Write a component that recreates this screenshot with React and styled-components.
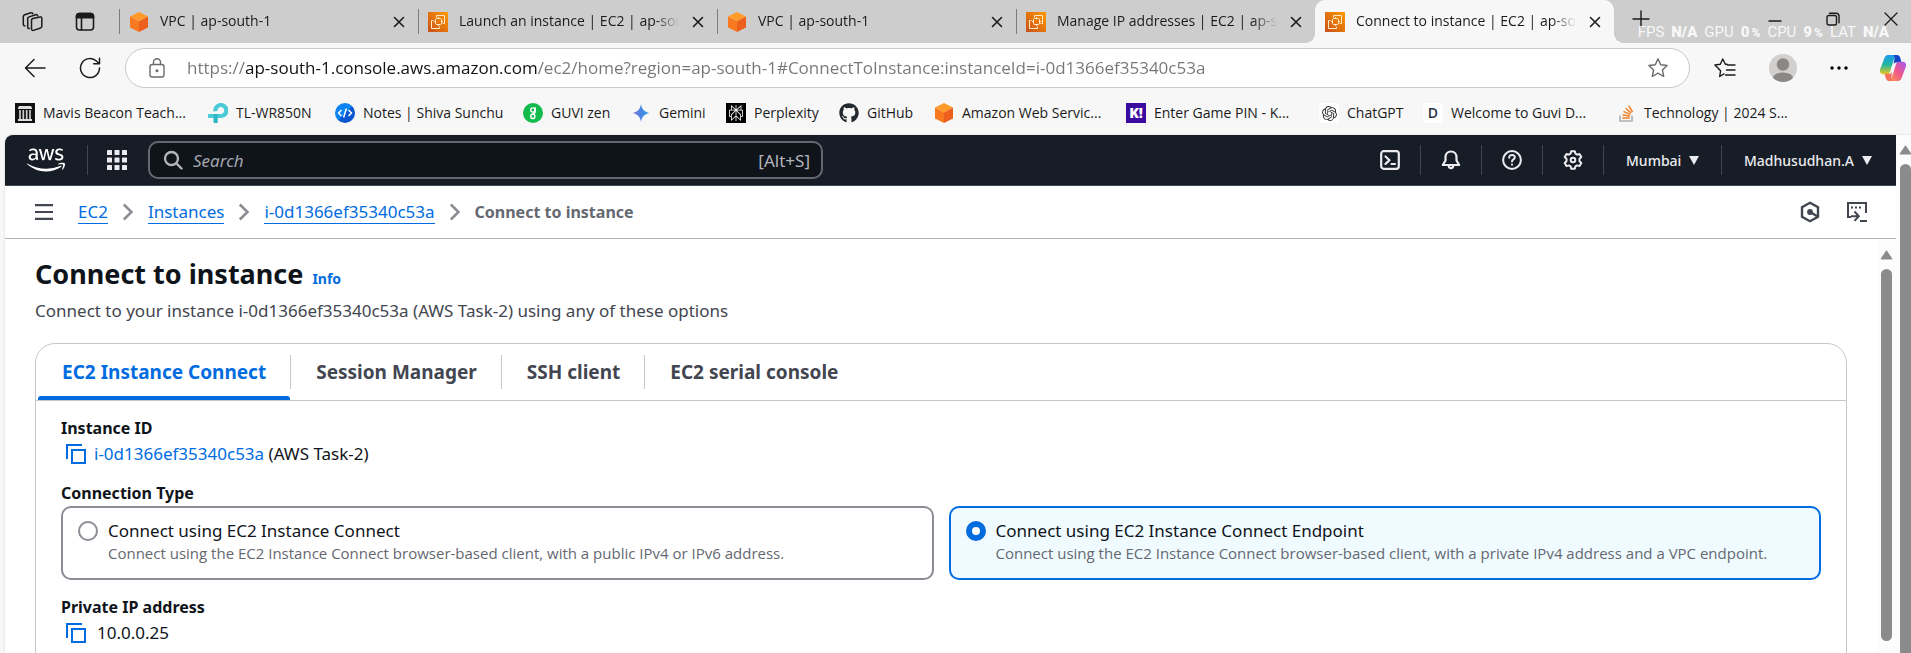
import React, { useState } from 'react';
import styled, { createGlobalStyle, css } from 'styled-components';
import { FaAws, FaGithub } from 'react-icons/fa';
import { SiOpenai, SiPerplexity } from 'react-icons/si';

const GlobalStyle = createGlobalStyle`
  *, *::before, *::after { box-sizing: border-box; }
  body { margin: 0; }
  button { font: inherit; color: inherit; background: none; border: 0; padding: 0; cursor: pointer; }
  a { text-decoration: none; }
  svg { display: block; flex: none; }
`;

const uiFont = `'Open Sans', 'Noto Sans', sans-serif`;
const pageFont = `'Noto Sans', 'Open Sans', sans-serif`;

/* ---------- browser frame ---------- */

const Browser = styled.div`
  height: 100vh;
  display: flex;
  flex-direction: column;
  overflow: hidden;
  background: #f7f7f7;
  color: #1b1b1b;
  font-family: ${uiFont};
  font-size: 14px;
`;

const TabStrip = styled.header`
  position: relative;
  display: flex;
  flex: none;
  height: 43px;
  background: #cdcdcd;
`;

const StripTools = styled.div`
  display: flex;
  align-items: center;
  flex: none;
  gap: 32px;
  width: 119px;
  padding-left: 21px;
`;

const IconButton = styled.button`
  display: flex;
  align-items: center;
  justify-content: center;
  flex: none;
  width: ${(p) => p.$w || 22}px;
  height: ${(p) => p.$h || 22}px;
  color: ${(p) => p.$color || 'inherit'};
`;

const Tabs = styled.div`
  display: flex;
  flex: 0 1 1495px;
  min-width: 0;
`;

const Tab = styled.div`
  position: relative;
  display: flex;
  align-items: center;
  flex: 1 1 0;
  min-width: 0;
  gap: 11px;
  padding: 0 11px 0 10px;
  ${(p) =>
    p.$active
      ? css`
          background: #f7f7f7;
          border-radius: 10px 10px 0 0;
          &::before,
          &::after {
            content: '';
            position: absolute;
            bottom: 0;
            width: 10px;
            height: 10px;
          }
          &::before {
            left: -10px;
            background: radial-gradient(circle at 0 0, transparent 10px, #f7f7f7 10px);
          }
          &::after {
            right: -10px;
            background: radial-gradient(circle at 100% 0, transparent 10px, #f7f7f7 10px);
          }
        `
      : css`
          &::before {
            content: '';
            position: absolute;
            left: 0;
            top: 9px;
            width: 1px;
            height: 25px;
            background: #7c7c7c;
          }
        `}
`;

const TabTitle = styled.button`
  flex: 1;
  min-width: 0;
  padding-bottom: 2px;
  overflow: hidden;
  text-align: left;
  white-space: nowrap;
  line-height: 20px;
  mask-image: linear-gradient(to right, #000 calc(100% - 24px), transparent);
`;

const WindowButtons = styled.div`
  display: flex;
  align-items: center;
  flex: 1;
  justify-content: space-between;
  padding: 0 9px 6px 16px;
`;

const WindowGroup = styled.div`
  display: flex;
  align-items: center;
  gap: 36px;
`;

const Stats = styled.div`
  position: absolute;
  right: 22px;
  bottom: 1px;
  display: flex;
  align-items: baseline;
  gap: 7px;
  color: rgba(255, 255, 255, 0.86);
  font-family: Roboto, sans-serif;
  font-size: 15px;
  line-height: 18px;
  pointer-events: none;
  b { font-weight: 900; }
  small { font-size: 12px; font-weight: 900; margin-left: 2px; }
`;

const Toolbar = styled.div`
  display: flex;
  align-items: center;
  flex: none;
  height: 50px;
  padding: 0 4px 0 24px;
`;

const NavButtons = styled.div`
  display: flex;
  gap: 33px;
  width: 101px;
`;

const AddressBar = styled.label`
  display: flex;
  align-items: center;
  flex: 1;
  min-width: 0;
  height: 40px;
  padding: 0 20px 0 20px;
  gap: 19px;
  background: #fff;
  border: 1px solid #c9c9c9;
  border-radius: 20px;
`;

const AddressInput = styled.input`
  flex: 1;
  min-width: 0;
  padding: 0;
  border: 0;
  outline: 0;
  font-family: ${uiFont};
  font-size: 17px;
  line-height: 24px;
  color: transparent;
  background: linear-gradient(to right, #767676 59px, #111 59px, #111 350px, #767676 350px);
  background-clip: text;
  -webkit-background-clip: text;
`;

const ToolbarActions = styled.div`
  display: flex;
  align-items: center;
  gap: 29px;
  padding-left: 22px;
`;

const Bookmarks = styled.nav`
  display: flex;
  flex: none;
  height: 42px;
  padding: 0 15px 2px;
  align-items: center;
`;

const Bookmark = styled.a`
  display: flex;
  align-items: center;
  flex: 0 1 ${(p) => p.$w}px;
  min-width: 0;
  gap: 8px;
  color: inherit;
  line-height: 20px;
  white-space: nowrap;
`;

const Badge = styled.span`
  display: flex;
  align-items: center;
  justify-content: center;
  flex: none;
  width: 20px;
  height: 20px;
  border-radius: ${(p) => p.$round || 0}px;
  background: ${(p) => p.$bg || 'transparent'};
  color: ${(p) => p.$fg || '#fff'};
  font-size: 14px;
  font-weight: ${(p) => p.$weight || 700};
  line-height: 20px;
`;

/* ---------- page ---------- */

const Viewport = styled.div`
  display: flex;
  flex: 1;
  min-height: 0;
  margin-left: 5px;
  background: #fff;
  border-radius: 8px 0 0 0;
  overflow: hidden;
  box-shadow: 0 0 2px #c4c4c4;
`;

const Console = styled.div`
  display: flex;
  flex-direction: column;
  flex: 1;
  min-width: 0;
  font-family: ${pageFont};
  font-size: 17px;
  line-height: 25px;
  color: #0f141a;
`;

const ScrollTrack = styled.div`
  display: flex;
  flex-direction: column;
  align-items: center;
  flex: none;
  width: ${(p) => p.$w}px;
  padding: ${(p) => (p.$page ? '10px 0 0 4px' : '11px 0 12px')};
  gap: 9px;
  background: #fcfcfc;
  overflow: hidden;
`;

const ScrollThumb = styled.div`
  flex: 1;
  width: 11px;
  border-radius: ${(p) => (p.$page ? '6px 6px 0 0' : '6px')};
  background: #8b8b8b;
`;

const TopNav = styled.div`
  display: flex;
  align-items: center;
  flex: none;
  height: 51px;
  padding: 0 24px 0 22px;
  background: #161d26;
  border-bottom: 1px solid #424650;
  color: #ebebf0;
`;

const Divider = styled.span`
  flex: none;
  width: 1px;
  height: 30px;
  background: #424650;
`;

const NavLogo = styled.a`
  display: flex;
  width: 60px;
  color: #fff;
`;

const AppsButton = styled(IconButton)`
  margin: 0 20px 0 18px;
`;

const SearchBox = styled.label`
  display: flex;
  align-items: center;
  flex: 0 1 675px;
  min-width: 0;
  height: 38px;
  padding: 0 11px 0 13px;
  gap: 10px;
  background: #0f141a;
  border: 2px solid #656871;
  border-radius: 10px;
  color: #b4b4bb;
`;

const SearchInput = styled.input`
  flex: 1;
  min-width: 0;
  padding: 0;
  border: 0;
  outline: 0;
  background: none;
  color: #ebebf0;
  font-family: ${pageFont};
  font-size: 17px;
  &::placeholder {
    color: #a4a4ad;
    font-style: italic;
    opacity: 1;
  }
`;

const NavTools = styled.div`
  display: flex;
  align-items: center;
  margin-left: auto;
`;

const NavTool = styled.button`
  display: flex;
  align-items: center;
  justify-content: center;
  width: 60px;
  height: 40px;
`;

const NavMenu = styled.button`
  display: flex;
  align-items: center;
  justify-content: space-between;
  width: ${(p) => p.$w}px;
  padding-left: 22px;
  padding-right: ${(p) => p.$pr || 0}px;
  font-size: 14px;
  font-weight: 500;
`;

const Crumbs = styled.div`
  display: flex;
  align-items: center;
  flex: none;
  height: 53px;
  padding: 0 29px 0 29px;
  border-bottom: 1px solid #b4b4bb;
  color: #424650;
`;

const CrumbList = styled.nav`
  display: flex;
  align-items: center;
  gap: 14px;
  margin-left: 24px;
  flex: 1;
`;

const Crumb = styled.a`
  color: #006ce0;
  line-height: 22px;
  border-bottom: 1px solid #006ce0;
`;

const CurrentCrumb = styled.span`
  color: #656871;
  font-size: 16px;
  font-weight: 700;
`;

const CrumbTools = styled.div`
  display: flex;
  gap: 27px;
`;

const Body = styled.div`
  display: flex;
  flex: 1;
  min-height: 0;
`;

const Main = styled.main`
  flex: 1;
  min-width: 0;
  padding: 17px 30px 0;
  overflow: hidden;
`;

const TitleRow = styled.div`
  display: flex;
  align-items: baseline;
  gap: 9px;
`;

const Title = styled.h1`
  margin: 0;
  font-size: 27px;
  line-height: 36px;
  font-weight: 700;
`;

const InfoLink = styled.a`
  color: #006ce0;
  font-size: 14px;
  font-weight: 700;
`;

const Lead = styled.p`
  margin: 6px 0 20px;
  color: #424650;
`;

const Panel = styled.section`
  border: 1px solid #c6c6cd;
  border-radius: 20px 20px 0 0;
  min-height: 400px;
`;

const TabList = styled.div`
  display: flex;
  padding: 0 2px;
  border-bottom: 1px solid #c6c6cd;
`;

const PanelTab = styled.button`
  position: relative;
  height: 56px;
  padding: 0 25px;
  font-size: 19px;
  font-weight: 700;
  color: ${(p) => (p.$active ? '#006ce0' : '#424650')};
  &:not(:last-child)::after {
    content: '';
    position: absolute;
    right: 0;
    top: 11px;
    width: 1px;
    height: 34px;
    background: #c6c6cd;
  }
  ${(p) =>
    p.$active &&
    css`
      padding-left: 24px;
      &::before {
        content: '';
        position: absolute;
        left: 0;
        right: 1px;
        bottom: 0;
        height: 4px;
        border-radius: 3px 3px 0 0;
        background: #006ce0;
      }
    `}
`;

const PanelBody = styled.div`
  padding: 15px 25px;
`;

const Field = styled.div`
  margin-bottom: 15px;
`;

const FieldLabel = styled.div`
  font-size: 16px;
  font-weight: 700;
`;

const FieldValue = styled.div`
  display: flex;
  align-items: center;
  gap: ${(p) => p.$gap}px;
  padding-left: 5px;
`;

const InstanceLink = styled.a`
  color: #006ce0;
`;

const TileGroup = styled.fieldset`
  border: 0;
  margin: 0 0 15px;
  padding: 0;
  min-width: 0;
`;

const TileLegend = styled.legend`
  padding: 0;
  font-size: 16px;
  font-weight: 700;
`;

const Tiles = styled.div`
  display: grid;
  grid-template-columns: 1fr 1fr;
  gap: 15px;
`;

const Tile = styled.label`
  display: flex;
  gap: 10px;
  height: 74px;
  padding: 10px 15px;
  border: 2px solid ${(p) => (p.$on ? '#006ce0' : '#8c8c94')};
  border-radius: 10px;
  background: ${(p) => (p.$on ? '#f0fbff' : '#fff')};
`;

const Radio = styled.input`
  appearance: none;
  flex: none;
  width: 20px;
  height: 20px;
  margin: 3px 0 0;
  border: 2px solid #8c8c94;
  border-radius: 50%;
  background: #fff;
  &:checked {
    border: 6px solid #006ce0;
  }
`;

const TileText = styled.span`
  display: flex;
  flex-direction: column;
`;

const TileHint = styled.span`
  color: #656871;
  font-family: ${uiFont};
  font-size: 15px;
  line-height: 20px;
`;

/* ---------- icons ---------- */

const Line = ({ size = 20, w = 1.4, box = 20, children }) => (
  <svg width={size} height={size} viewBox={`0 0 ${box} ${box}`} fill="none" stroke="currentColor" strokeWidth={w} strokeLinecap="round" strokeLinejoin="round">
    {children}
  </svg>
);

const CloseIcon = () => (
  <Line size={12} box={12} w={1.6}><path d="M1.5 1.5l9 9M10.5 1.5l-9 9" /></Line>
);

const WorkspacesIcon = () => (
  <Line size={22} box={22} w={1.5}>
    <path d="M10.5 9.2c.1-.8.6-1.400 1.400-1.600l7-1.700c1-.2 1.900.4 1.900 1.400v8c0 .9-.5 1.500-1.300 1.700l-7 2.400c-1 .3-2-.3-2-1.400z" />
    <path d="M8.300 17.500c-1 .1-1.600-.5-1.600-1.500V7.600c0-.9.5-1.500 1.400-1.700l6.600-2.200c1-.3 1.800.2 2 1" />
    <path d="M4 14.800c-1 .1-1.700-.5-1.700-1.500V5.600c0-.9.500-1.500 1.400-1.800l6.200-2c1-.3 1.800.1 2 .9" />
  </Line>
);

const TabActionsIcon = () => (
  <Line size={20} w={1.6}>
    <rect x="1.500" y="1.500" width="17" height="16.500" rx="3" />
    <path d="M1.500 4.500a3 3 0 013-3h11a3 3 0 013 3v1.200h-17z" fill="currentColor" />
    <path d="M6.500 6v12" />
  </Line>
);

const CubeIcon = () => (
  <svg width="20" height="20" viewBox="0 0 20 20">
    <path d="M10 0l9 4.600-9 4.800-9-4.800z" fill="#ff9a2b" />
    <path d="M1 4.600l9 4.800V20l-9-4.600z" fill="#f8791f" />
    <path d="M19 4.600l-9 4.800V20l9-4.600z" fill="#ed5f1c" />
  </svg>
);

const Ec2Icon = ({ id }) => (
  <svg width="20" height="20" viewBox="0 0 20 20">
    <defs>
      <linearGradient id={id} x1="0" y1="1" x2="1" y2="0">
        <stop offset="0" stopColor="#c8511b" />
        <stop offset="1" stopColor="#f90" />
      </linearGradient>
    </defs>
    <rect width="20" height="20" fill={`url(#${id})`} />
    <g fill="none" stroke="#ffe9c9" strokeWidth="1">
      <path d="M8.500 5.500V3.500h8v8h-2" />
      <rect x="7.500" y="6.500" width="6" height="6" rx="1.200" />
      <path d="M5.500 8.500h-2v8h8v-2M10.500 5v1.500M13.500 9.500H15M10.500 12.500V14M6 9.500h1.500" />
    </g>
  </svg>
);

const StarIcon = ({ lines }) => (
  <Line size={22} box={22} w={1.400}>
    {lines ? (
      <path d="M6.600 13.800l-.9 5.700 4.300-2.600M13 7.200h-1.700L8.800 2 6.300 7.200.9 8l4.100 4M13.500 8H21M12.500 13H21M11.500 18H21M4.600 12l2 1.800" />
    ) : (
      <path d="M11 1.800l2.700 6 6.400.7-4.700 4.400 1.300 6.600L11 16.200l-5.700 3.300 1.300-6.600-4.700-4.400 6.400-.7z" />
    )}
  </Line>
);

const AvatarIcon = () => (
  <svg width="28" height="28" viewBox="0 0 28 28">
    <clipPath id="avatarClip"><circle cx="14" cy="14" r="14" /></clipPath>
    <g clipPath="url(#avatarClip)">
      <rect width="28" height="28" fill="#d2d0ce" />
      <circle cx="14" cy="10.500" r="6.200" fill="#8a8886" />
      <ellipse cx="14" cy="24" rx="10" ry="5.600" fill="#8a8886" />
    </g>
  </svg>
);

const CopilotIcon = () => (
  <svg width="28" height="28" viewBox="0 0 28 28">
    <defs>
      <linearGradient id="cpA" x1="0" y1="0" x2="0" y2="1">
        <stop offset="0" stopColor="#1d9bf0" /><stop offset=".5" stopColor="#1fb6a0" /><stop offset="1" stopColor="#e8c81c" />
      </linearGradient>
      <linearGradient id="cpB" x1="1" y1="0" x2="0" y2="1">
        <stop offset="0" stopColor="#a05cf5" /><stop offset=".5" stopColor="#f0568c" /><stop offset="1" stopColor="#fb9a4b" />
      </linearGradient>
    </defs>
    <path d="M17 1h-7C6.500 1 5.600 3 4.800 5.800L1.200 15c-.9 3 .4 5.200 3.200 5.200h3.400c2 0 2.800-1.200 3.400-3L15 5c.5-1.500 1-2.400 2.400-2.400z" fill="url(#cpA)" />
    <path d="M14.500 1H18c2 0 2.800 1.500 3.300 3l1.200 4.400h-4.700c-2 0-2.600.6-3.200 2.400l.9-6.800c0-1.600-.2-2.300-1-3z" fill="#1546c8" />
    <path d="M11 27h7c3.500 0 4.400-2 5.200-4.800L26.800 13c.9-3-.4-5.200-3.200-5.200h-3.400c-2 0-2.800 1.200-3.400 3L13 23c-.5 1.500-1 2.400-2.400 2.400z" fill="url(#cpB)" />
    <path d="M13.500 27H10c-2 0-2.800-1.500-3.300-3l-1.200-4.200h4.300c2 0 2.600-.6 3.200-2.400L12.400 24c0 1.600.3 2.300 1.100 3z" fill="#f5705c" />
  </svg>
);

const CopyIcon = () => (
  <svg width="20" height="20" viewBox="0 0 20 20" fill="none" stroke="#006ce0" strokeWidth="2">
    <rect x="6" y="6" width="13" height="13" />
    <path d="M1 15V1h15" />
  </svg>
);

const Chevron = () => (
  <svg width="12" height="18" viewBox="0 0 12 18" fill="none" stroke="#8c8c94" strokeWidth="2.500">
    <path d="M1.800 1.500L9.500 9l-7.700 7.500" />
  </svg>
);

const CaretDown = () => (
  <svg width="10" height="9" viewBox="0 0 10 9"><path d="M0 0h10L5 9z" fill="currentColor" /></svg>
);

const ArrowUp = () => (
  <svg width="13" height="10" viewBox="0 0 13 10"><path d="M6.500.8L12 9H1z" fill="#8b8b8b" stroke="#8b8b8b" strokeLinejoin="round" /></svg>
);

const PillarIcon = () => (
  <svg width="20" height="20" viewBox="0 0 20 20">
    <rect width="20" height="20" fill="#111" />
    <path d="M3 5l1-2h12l1 2v1H3zM3 16h14v2H3z" fill="#ddd" />
    <path d="M5 7v9M8.300 7v9M11.700 7v9M15 7v9" stroke="#ccc" strokeWidth="1.700" />
  </svg>
);

const TpLinkIcon = () => (
  <svg width="20" height="20" viewBox="0 0 20 20" fill="none" strokeWidth="4.200">
    <path d="M7.400 8.200A5.500 5.500 0 1112.600 13H0" stroke="#4acbd6" />
    <path d="M7.600 11v9" stroke="#2bb8c4" />
  </svg>
);

const CodeIcon = () => (
  <svg width="20" height="20" viewBox="0 0 20 20">
    <defs>
      <linearGradient id="codeG" x1="0" y1="0" x2="1" y2="1"><stop offset=".5" stopColor="#0c83f2" /><stop offset=".5" stopColor="#0a56cf" /></linearGradient>
    </defs>
    <circle cx="10" cy="10" r="10" fill="url(#codeG)" />
    <path d="M6.500 7L3.500 10l3 3M13.500 7l3 3-3 3M11.400 5.500l-2.800 9" fill="none" stroke="#fff" strokeWidth="1.500" />
  </svg>
);

const GuviIcon = () => (
  <svg width="20" height="20" viewBox="0 0 20 20">
    <circle cx="10" cy="10" r="10" fill="#12bb4c" />
    <g fill="none" stroke="#fff" strokeWidth="1.400">
      <circle cx="9.800" cy="7" r="2.100" />
      <circle cx="9.800" cy="13.400" r="2.100" />
      <path d="M12.200 4.300v4.500c0 1.200-1 1.800-2.800 1.800" />
    </g>
  </svg>
);

const GeminiIcon = () => (
  <svg width="18" height="18" viewBox="0 0 18 18">
    <defs>
      <linearGradient id="gemG" x1="0" y1="0" x2="1" y2="0"><stop offset="0" stopColor="#8e75d8" /><stop offset=".5" stopColor="#4a86e0" /><stop offset="1" stopColor="#1fa2f0" /></linearGradient>
    </defs>
    <path d="M9 0c.6 5 4 8.400 9 9-5 .6-8.400 4-9 9-.6-5-4-8.400-9-9 5-.6 8.400-4 9-9z" fill="url(#gemG)" />
  </svg>
);

const StackIcon = () => (
  <svg width="15" height="18" viewBox="0 0 15 18" fill="none">
    <path d="M1 11.500V17h12v-5.500" stroke="#aeb2b6" strokeWidth="1.700" />
    <path d="M3.300 14h7.500M3.500 10.800l7.300 1.500M4.500 7.400l6.800 3.200M6.700 4.200l5.500 4.900M9.800 1.600l3.700 6.400" stroke="#f48024" strokeWidth="1.500" />
  </svg>
);

/* ---------- data ---------- */

const browserTabs = [
  { title: 'VPC | ap-south-1', icon: 'vpc' },
  { title: 'Launch an instance | EC2 | ap-south-1', icon: 'ec2' },
  { title: 'VPC | ap-south-1', icon: 'vpc' },
  { title: 'Manage IP addresses | EC2 | ap-south-1', icon: 'ec2' },
  { title: 'Connect to instance | EC2 | ap-south-1', icon: 'ec2', active: true },
];

const bookmarks = [
  { label: 'Mavis Beacon Teach...', w: 193, icon: <PillarIcon /> },
  { label: 'TL-WR850N', w: 127, icon: <TpLinkIcon /> },
  { label: 'Notes | Shiva Sunchu', w: 188, icon: <CodeIcon /> },
  { label: 'GUVI zen', w: 108, icon: <GuviIcon /> },
  { label: 'Gemini', w: 95, icon: <GeminiIcon /> },
  { label: 'Perplexity', w: 113, icon: <SiPerplexity size={16} />, bg: '#000' },
  { label: 'GitHub', w: 95, icon: <FaGithub size={20} />, fg: '#24292f' },
  { label: 'Amazon Web Servic...', w: 192, icon: <CubeIcon /> },
  { label: 'Enter Game PIN - K...', w: 193, icon: 'K!', bg: '#3b0a9e', weight: 800 },
  { label: 'ChatGPT', w: 104, icon: <SiOpenai size={15} />, bg: '#fff', fg: '#333', round: 4 },
  { label: 'Welcome to Guvi D...', w: 193, icon: 'D', bg: '#fff', fg: '#2b3044', round: 3, weight: 600 },
  { label: 'Technology | 2024 S...', w: 193, icon: <StackIcon /> },
];

const panelTabs = ['EC2 Instance Connect', 'Session Manager', 'SSH client', 'EC2 serial console'];

const tiles = [
  {
    id: 'public',
    label: 'Connect using EC2 Instance Connect',
    hint: 'Connect using the EC2 Instance Connect browser-based client, with a public IPv4 or IPv6 address.',
  },
  {
    id: 'endpoint',
    label: 'Connect using EC2 Instance Connect Endpoint',
    hint: 'Connect using the EC2 Instance Connect browser-based client, with a private IPv4 address and a VPC endpoint.',
  },
];

/* ---------- sections ---------- */

const BrowserTabs = () => (
  <TabStrip>
    <StripTools>
      <IconButton aria-label="Workspaces"><WorkspacesIcon /></IconButton>
      <IconButton aria-label="Tab actions" $w={20}><TabActionsIcon /></IconButton>
    </StripTools>
    <Tabs>
      {browserTabs.map((t, i) => (
        <Tab key={i} $active={t.active}>
          {t.icon === 'vpc' ? <CubeIcon /> : <Ec2Icon id={`ec2-${i}`} />}
          <TabTitle>{t.title}</TabTitle>
          <IconButton aria-label="Close tab" $w={16}><CloseIcon /></IconButton>
        </Tab>
      ))}
    </Tabs>
    <WindowButtons>
      <IconButton aria-label="New tab"><Line size={18} box={18} w={1.400}><path d="M9 1v16M1 9h16" /></Line></IconButton>
      <WindowGroup>
        <IconButton aria-label="Minimize"><Line size={14} box={14} w={1.400}><path d="M1 9h12" /></Line></IconButton>
        <IconButton aria-label="Restore">
          <Line size={14} box={14} w={1.400}><rect x="1" y="3.500" width="9.500" height="9.500" rx="1.800" /><path d="M3.500 1.200h6.500a3 3 0 013 3v6.500" /></Line>
        </IconButton>
        <IconButton aria-label="Close window"><Line size={14} box={14} w={1.300}><path d="M1 1l12 12M13 1L1 13" /></Line></IconButton>
      </WindowGroup>
    </WindowButtons>
    <Stats>
      <span>FPS</span><b>N/A</b><span>GPU</span><b>0<small>%</small></b>
      <span>CPU</span><b>9<small>%</small></b><span>LAT</span><b>N/A</b>
    </Stats>
  </TabStrip>
);

const BrowserToolbar = () => {
  const [url, setUrl] = useState('https://ap-south-1.console.aws.amazon.com/ec2/home?region=ap-south-1#ConnectToInstance:instanceId=i-0d1366ef35340c53a');
  return (
    <Toolbar>
      <NavButtons>
        <IconButton aria-label="Back"><Line size={22} box={22} w={1.500}><path d="M21 11H2M10 2.500L1.500 11l8.500 8.500" /></Line></IconButton>
        <IconButton aria-label="Refresh"><Line size={22} box={22} w={1.500}><path d="M20.500 11A9.500 9.500 0 1117.700 4.300l2.600 2.400M20.500 1.200v5.600h-5.800" /></Line></IconButton>
      </NavButtons>
      <AddressBar>
        <IconButton as="span" $color="#6b6b6b">
          <Line size={20} w={1.400}><rect x="3" y="6.500" width="14" height="12.500" rx="2.200" /><path d="M6.500 6.500V4.300a3.500 3.500 0 017 0v2.200" /><circle cx="10" cy="12.800" r=".8" fill="currentColor" /></Line>
        </IconButton>
        <AddressInput aria-label="Address" value={url} onChange={(e) => setUrl(e.target.value)} />
        <IconButton aria-label="Add to favorites" $color="#6b6b6b"><StarIcon /></IconButton>
      </AddressBar>
      <ToolbarActions>
        <IconButton aria-label="Favorites" $w={26}><StarIcon lines /></IconButton>
        <IconButton aria-label="Profile" $w={32} $h={28}><AvatarIcon /></IconButton>
        <IconButton aria-label="Settings and more"><svg width="18" height="4" viewBox="0 0 18 4"><circle cx="2" cy="2" r="1.700" /><circle cx="9" cy="2" r="1.700" /><circle cx="16" cy="2" r="1.700" /></svg></IconButton>
        <IconButton aria-label="Copilot" $w={28} $h={28}><CopilotIcon /></IconButton>
      </ToolbarActions>
    </Toolbar>
  );
};

const ConsoleNav = () => (
  <TopNav>
    <NavLogo href="#home" aria-label="AWS home"><FaAws size={38} /></NavLogo>
    <Divider />
    <AppsButton aria-label="Services">
      <svg width="20" height="20" viewBox="0 0 20 20" fill="currentColor">
        {[0, 7.5, 15].map((y) => [0, 7.5, 15].map((x) => <rect key={`${x}-${y}`} x={x} y={y} width="5" height="5" rx=".6" />))}
      </svg>
    </AppsButton>
    <SearchBox>
      <Line size={20} w={2.400}><circle cx="8.500" cy="8.500" r="6.500" /><path d="M13.500 13.500l5 5" /></Line>
      <SearchInput aria-label="Search" placeholder="Search" />
      <span>[Alt+S]</span>
    </SearchBox>
    <NavTools>
      <NavTool aria-label="CloudShell"><Line size={20} w={2.200}><rect x="1.200" y="1.200" width="17.600" height="17.600" rx="2.500" /><path d="M5.500 6.500l4 3.700-4 3.700M11.500 14H15" /></Line></NavTool>
      <Divider />
      <NavTool aria-label="Notifications"><Line size={20} w={2.200}><path d="M10 1.500c-3.500 0-5.500 2.600-5.500 5.700v3.300L1.800 15h16.400l-2.700-4.500V7.200c0-3.100-2-5.700-5.500-5.700zM7.800 15.500c0 3.600 4.400 3.600 4.400 0" /></Line></NavTool>
      <Divider />
      <NavTool aria-label="Help"><Line size={20} w={2}><circle cx="10" cy="10" r="8.900" /><path d="M7.200 7.700c0-3.800 5.800-3.500 5.600-.2-.1 2-2.800 1.900-2.800 4M10 14.500v.3" /></Line></NavTool>
      <Divider />
      <NavTool aria-label="Settings">
        <Line size={20} w={2}>
          <path d="M8.200 1.200h3.600l.6 2.400 1.700 1 2.400-.7 1.800 3.100-1.800 1.700v2.600l1.800 1.700-1.800 3.100-2.400-.7-1.700 1-.6 2.400H8.200l-.6-2.400-1.700-1-2.400.7L1.700 13l1.800-1.700V8.700L1.700 7l1.800-3.100 2.400.7 1.700-1z" />
          <circle cx="10" cy="10" r="2.300" />
        </Line>
      </NavTool>
      <Divider />
      <NavMenu $w={117} $pr={22}>Mumbai<CaretDown /></NavMenu>
      <Divider />
      <NavMenu $w={150}>Madhusudhan.A<CaretDown /></NavMenu>
    </NavTools>
  </TopNav>
);

const CrumbBar = () => (
  <Crumbs>
    <IconButton aria-label="Open navigation" $w={20}>
      <svg width="18" height="16" viewBox="0 0 18 16" stroke="currentColor" strokeWidth="2.200"><path d="M0 1.100h18M0 8h18M0 14.900h18" /></svg>
    </IconButton>
    <CrumbList aria-label="Breadcrumbs">
      <Crumb href="#ec2">EC2</Crumb><Chevron />
      <Crumb href="#instances">Instances</Crumb><Chevron />
      <Crumb href="#instance">i-0d1366ef35340c53a</Crumb><Chevron />
      <CurrentCrumb>Connect to instance</CurrentCrumb>
    </CrumbList>
    <CrumbTools>
      <IconButton aria-label="Amazon Q" $w={20}>
        <svg width="20" height="22" viewBox="0 0 20 22" fill="none" stroke="currentColor" strokeWidth="2.400"><path d="M10 1.800l8 4.500v9.400l-8 4.500-8-4.500V6.300z" /><circle cx="10" cy="11" r="1.700" fill="currentColor" /><path d="M11 11.500l6.500 4" /></svg>
      </IconButton>
      <IconButton aria-label="Split panel" $w={20}>
        <svg width="20" height="20" viewBox="0 0 20 20" fill="none" stroke="currentColor" strokeWidth="2"><path d="M4 15H1V1h18v10M4 5.500h2M8 5.500h2M12 5.500h2M4 14.200h7M7.500 9.500l4.300 4.700-4.300 4.700M13 19h7" /></svg>
      </IconButton>
    </CrumbTools>
  </Crumbs>
);

const ConnectPanel = () => {
  const [tab, setTab] = useState(0);
  const [choice, setChoice] = useState('endpoint');
  return (
    <Panel>
      <TabList role="tablist">
        {panelTabs.map((t, i) => (
          <PanelTab key={t} role="tab" aria-selected={i === tab} $active={i === tab} onClick={() => setTab(i)}>{t}</PanelTab>
        ))}
      </TabList>
      <PanelBody>
        <Field>
          <FieldLabel>Instance ID</FieldLabel>
          <FieldValue $gap={8}>
            <IconButton aria-label="Copy instance ID" $w={20}><CopyIcon /></IconButton>
            <span><InstanceLink href="#instance">i-0d1366ef35340c53a</InstanceLink> (AWS Task-2)</span>
          </FieldValue>
        </Field>
        <TileGroup>
          <TileLegend>Connection Type</TileLegend>
          <Tiles>
            {tiles.map((t) => (
              <Tile key={t.id} $on={choice === t.id}>
                <Radio type="radio" name="connection" checked={choice === t.id} onChange={() => setChoice(t.id)} />
                <TileText>{t.label}<TileHint>{t.hint}</TileHint></TileText>
              </Tile>
            ))}
          </Tiles>
        </TileGroup>
        <Field>
          <FieldLabel>Private IP address</FieldLabel>
          <FieldValue $gap={11}>
            <IconButton aria-label="Copy IP address" $w={20}><CopyIcon /></IconButton>
            <span>10.0.0.25</span>
          </FieldValue>
        </Field>
      </PanelBody>
    </Panel>
  );
};

export default function App() {
  return (
    <>
      <GlobalStyle />
      <Browser>
        <BrowserTabs />
        <BrowserToolbar />
        <Bookmarks aria-label="Favorites bar">
          {bookmarks.map((b) => (
            <Bookmark key={b.label} href="#bookmark" $w={b.w}>
              <Badge $bg={b.bg} $fg={b.fg} $round={b.round} $weight={b.weight}>{b.icon}</Badge>
              {b.label}
            </Bookmark>
          ))}
        </Bookmarks>
        <Viewport>
          <Console>
            <ConsoleNav />
            <CrumbBar />
            <Body>
              <Main>
                <TitleRow>
                  <Title>Connect to instance</Title>
                  <InfoLink href="#info">Info</InfoLink>
                </TitleRow>
                <Lead>Connect to your instance i-0d1366ef35340c53a (AWS Task-2) using any of these options</Lead>
                <ConnectPanel />
              </Main>
              <ScrollTrack $w={19}><ArrowUp /><ScrollThumb /></ScrollTrack>
            </Body>
          </Console>
          <ScrollTrack $w={15} $page><ArrowUp /><ScrollThumb $page /></ScrollTrack>
        </Viewport>
      </Browser>
    </>
  );
}
